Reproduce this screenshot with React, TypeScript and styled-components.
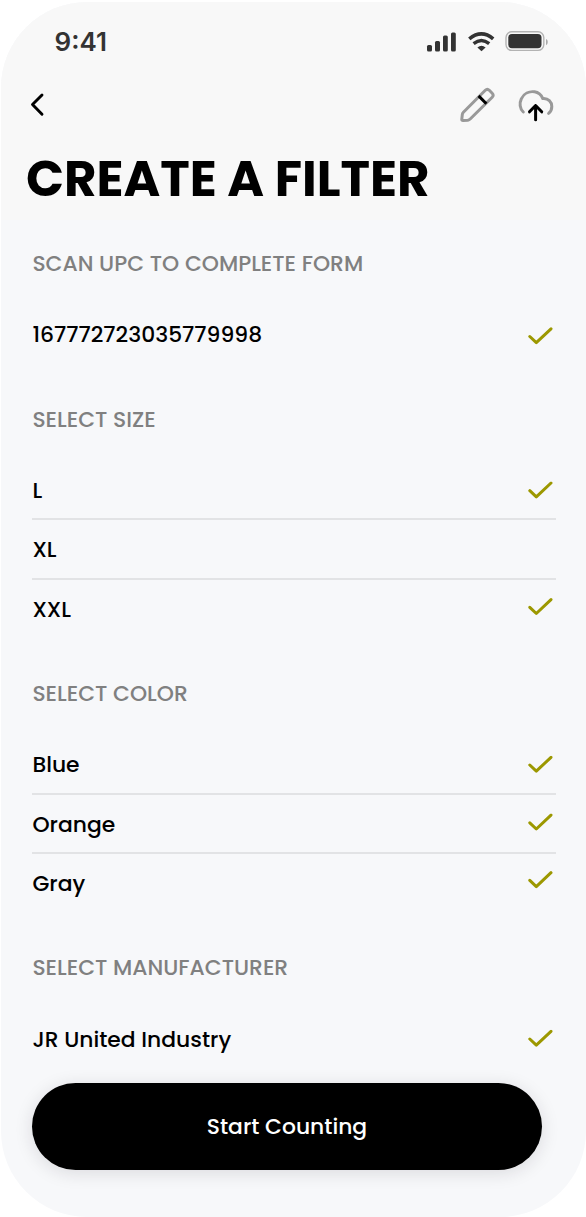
import React from 'react';
import styled, { createGlobalStyle } from 'styled-components';

const GlobalStyle = createGlobalStyle`
  * { box-sizing: border-box; }
  body { margin: 0; background: #fff; font-family: Poppins, Inter, sans-serif; color: #000; }
`;

const Phone = styled.main`
  width: 584.5px;
  height: 1215px;
  margin: 2px 0 0 1px;
  border-radius: 86px;
  overflow: hidden;
  background: #f7f8fa;
`;

const Header = styled.header`
  height: 218px;
  background: #f8f8f8;
`;

const StatusBar = styled.div`
  display: flex;
  justify-content: space-between;
  height: 68px;
  padding: 24px 37px 0 53.5px;
`;

const Time = styled.span`
  font: 600 26px/32px Inter, sans-serif;
  letter-spacing: 0;
  color: #333;
`;

const StatusIcons = styled.svg`
  width: 123px;
  height: 24px;
  margin-top: 3px;
`;

const Toolbar = styled.nav`
  display: flex;
  align-items: center;
  justify-content: space-between;
  height: 69px;
  padding: 0 32px 0 27px;
`;

const Actions = styled.div`
  display: flex;
  gap: 22px;
`;

const IconButton = styled.button`
  display: flex;
  padding: 0;
  border: 0;
  background: none;
`;

const Title = styled.h1`
  margin: 4px 0 0 25px;
  font-size: 49.9px;
  line-height: 72px;
  font-weight: 700;
  white-space: nowrap;
`;

const Content = styled.div`
  display: flex;
  flex-direction: column;
  gap: 40.3px;
  padding: 28.9px 29.5px 0 31px;
`;

const Heading = styled.h2`
  margin: 0 0 26.4px 0.4px;
  font-size: 21.85px;
  line-height: 30px;
  font-weight: 500;
  color: #808080;
  white-space: nowrap;
`;

const List = styled.ul`
  margin: 0;
  padding: 0;
  list-style: none;
`;

const Row = styled.li`
  display: flex;
  align-items: center;
  justify-content: space-between;
  height: 59.2px;
  padding: 0 3px 0 0.4px;
  &:not(:last-child) { box-shadow: inset 0 -2px #e2e3e5; }
`;

const Label = styled.span`
  padding-top: 0.9px;
  font-size: 21.85px;
  line-height: 30px;
  font-weight: 500;
  white-space: nowrap;
`;

const CheckIcon = styled.svg<{ $shift: number }>`
  width: 25px;
  height: 18px;
  transform: translateY(${(p) => p.$shift}px);
`;

const StartButton = styled.button`
  display: block;
  width: 510px;
  height: 87px;
  margin: 14.4px 0 0 31px;
  padding: 0.4px 0 0;
  border: 0;
  border-radius: 44px;
  background: #000;
  color: #fff;
  font: 500 21.85px/30px Poppins, Inter, sans-serif;
  box-shadow: 0 3px 18px rgba(30, 20, 40, 0.13);
`;

type Item = { label: string; check?: number };
type Section = { title: string; items: Item[] };

const sections: Section[] = [
  { title: 'SCAN UPC TO COMPLETE FORM', items: [{ label: '167772723035779998', check: 1 }] },
  {
    title: 'SELECT SIZE',
    items: [{ label: 'L', check: -0.8 }, { label: 'XL' }, { label: 'XXL', check: -2.2 }],
  },
  {
    title: 'SELECT COLOR',
    items: [
      { label: 'Blue', check: -0.5 },
      { label: 'Orange', check: -1.7 },
      { label: 'Gray', check: -3.1 },
    ],
  },
  { title: 'SELECT MANUFACTURER', items: [{ label: 'JR United Industry', check: -0.5 }] },
];

const Check = ({ shift }: { shift: number }) => (
  <CheckIcon $shift={shift} viewBox="0 0 25 18" fill="none">
    <path d="M1.8 9.5 8.3 15.7 23 1.8" stroke="#9c9800" strokeWidth="3" strokeLinecap="round" strokeLinejoin="round" />
  </CheckIcon>
);

const App = () => (
  <>
    <GlobalStyle />
    <Phone>
      <Header>
        <StatusBar>
          <Time>9:41</Time>
          <StatusIcons viewBox="426 29 123 24" fill="none">
            <g fill="#333">
              <rect x="427" y="45" width="5" height="6.5" rx="1.5" />
              <rect x="435" y="41" width="5" height="10.5" rx="1.5" />
              <rect x="443" y="35.5" width="4.8" height="16" rx="1.5" />
              <rect x="451" y="32.5" width="4.8" height="19" rx="1.5" />
              <rect x="508.3" y="34" width="33.2" height="14.2" rx="3.6" />
            </g>
            <path d="M469.3 38.9Q481.5 29 493.2 38.9" stroke="#333" strokeWidth="3.7" />
            <path d="M473.6 43.6Q481.5 37.4 489.2 43.6" stroke="#333" strokeWidth="3.4" />
            <path d="M477.4 47.4Q481.5 43.9 485.6 47.4L481.5 51.3Z" fill="#333" />
            <rect x="506" y="31.8" width="37.8" height="18.6" rx="5.8" stroke="#b3b3b3" strokeWidth="1.4" />
            <path d="M546 39v6.2q1.8-.7 1.8-3.1t-1.8-3.1Z" fill="#aaa" />
          </StatusIcons>
        </StatusBar>
        <Toolbar>
          <IconButton aria-label="Back">
            <svg width="18" height="26" viewBox="0 0 18 26" fill="none">
              <path d="M14 3 4.5 12.5 14 22.2" stroke="#000" strokeWidth="2.9" strokeLinecap="round" strokeLinejoin="round" />
            </svg>
          </IconButton>
          <Actions>
            <IconButton aria-label="Edit">
              <svg width="36" height="36" viewBox="460 87 36 36" fill="none" strokeWidth="3" strokeLinecap="round" strokeLinejoin="round">
                <path d="M461.8 119.2L462.3 114.6Q462.4 113.3 463.4 112.3L485.3 90.3Q487.3 88.3 489.3 90.3L492.2 93.2Q494.2 95.2 492.2 97.2L470.2 119Q469.2 120 467.8 120.2L463 120.5Q461.7 120.5 461.8 119.2Z" stroke="#999" />
                <path d="M478.6 95.9 486.4 103.7" stroke="#000" strokeLinecap="butt" />
              </svg>
            </IconButton>
            <IconButton aria-label="Upload">
              <svg width="36" height="36" viewBox="518.2 87 36 36" fill="none" strokeWidth="3" strokeLinecap="round" strokeLinejoin="round">
                <path d="M523.5 112C520 108.8 519.4 103.2 521.5 98.8C524 93.6 529.4 91 534.7 91.8C538.8 92.4 541.4 94.8 543 98.6C548.5 98 552 102 552 106.5C552 109.5 551 111.8 548.8 113.4" stroke="#999" />
                <path d="M535.8 119.7V105.5M529.7 111.8 535.8 105.5 541.9 111.8" stroke="#000" />
              </svg>
            </IconButton>
          </Actions>
        </Toolbar>
        <Title>CREATE A FILTER</Title>
      </Header>
      <Content>
        {sections.map((section) => (
          <section key={section.title}>
            <Heading>{section.title}</Heading>
            <List>
              {section.items.map((item) => (
                <Row key={item.label}>
                  <Label>{item.label}</Label>
                  {item.check !== undefined && <Check shift={item.check} />}
                </Row>
              ))}
            </List>
          </section>
        ))}
      </Content>
      <StartButton>Start Counting</StartButton>
    </Phone>
  </>
);

export default App;
